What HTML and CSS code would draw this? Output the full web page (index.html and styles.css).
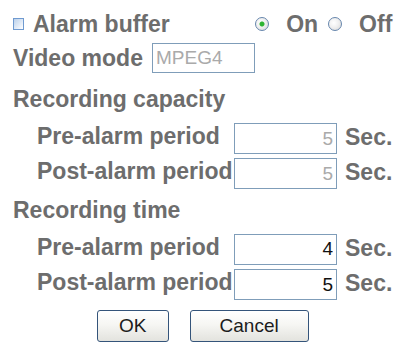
FILE: index.html
```html
<!DOCTYPE html>
<html>
<head>
<meta charset="utf-8">
<link rel="stylesheet" href="styles.css">
</head>
<body>
<main class="form">
  <div class="row row-alarm">
    <div class="check"><span class="checkbox"></span><span>Alarm buffer</span></div>
    <div class="radios">
      <span class="radio radio-on"></span><span class="radio-label">On</span>
      <span class="radio"></span><span>Off</span>
    </div>
  </div>
  <div class="row">
    <span class="label-video">Video mode</span>
    <input class="field field-video dim" type="text" value="MPEG4" readonly>
  </div>
  <div class="row">Recording capacity</div>
  <div class="row sub">
    <span class="label">Pre-alarm period</span>
    <input class="field field-num dim" type="text" value="5" readonly>
    <span class="unit">Sec.</span>
  </div>
  <div class="row sub">
    <span class="label">Post-alarm period</span>
    <input class="field field-num dim" type="text" value="5" readonly>
    <span class="unit">Sec.</span>
  </div>
  <div class="row">Recording time</div>
  <div class="row sub">
    <span class="label">Pre-alarm period</span>
    <input class="field field-num" type="text" value="4">
    <span class="unit">Sec.</span>
  </div>
  <div class="row sub">
    <span class="label">Post-alarm period</span>
    <input class="field field-num" type="text" value="5">
    <span class="unit">Sec.</span>
  </div>
  <div class="row buttons">
    <button class="btn btn-ok" type="button">OK</button>
    <button class="btn btn-cancel" type="button">Cancel</button>
  </div>
</main>
</body>
</html>
```
FILE: styles.css
```css
html, body {
  background: #ffffff;
}

body {
  margin: 0;
  padding: 8px 0 0 13px;
  font-family: "Liberation Sans", Arial, sans-serif;
}

.form {
  width: 379px;
  display: grid;
  grid-template-rows: 32px 36px 46px 33px 37px 37px 40px 31px 51px;
  color: #6d6d6d;
  font-weight: bold;
  font-size: 23px;
}

.row {
  display: flex;
  align-items: center;
  white-space: nowrap;
}

.row-alarm {
  justify-content: space-between;
}

.check {
  display: flex;
  align-items: center;
}

.checkbox {
  width: 9px;
  height: 10px;
  border: 1px solid #6f9ad0;
  background: linear-gradient(135deg, #bcd1ea 0%, #e3ecf7 60%, #ffffff 100%);
  margin-right: 9px;
}

.radios {
  display: flex;
  align-items: center;
}

.radio {
  width: 12px;
  height: 12px;
  border: 1px solid #6686ad;
  border-radius: 50%;
  background: radial-gradient(circle at 40% 40%, #ffffff 0%, #f0f0f0 45%, #d4d4d4 100%);
  margin-right: 17px;
}

.radio-on {
  background:
    radial-gradient(circle, #2eb431 0, #2eb431 2px, rgba(46, 180, 49, 0) 3px),
    radial-gradient(circle at 40% 40%, #ffffff 0%, #f0f0f0 45%, #d4d4d4 100%);
}

.radio-label {
  margin-right: 10px;
}

.label-video {
  width: 139px;
}

.field {
  box-sizing: border-box;
  border: 1px solid #7f9db9;
  background: #ffffff;
  font-family: "Liberation Sans", Arial, sans-serif;
  font-weight: normal;
  font-size: 19px;
  color: #111111;
  padding: 0 3px;
  margin: 0;
  outline: none;
}

.field-video {
  width: 103px;
  height: 30px;
}

.field-num {
  width: 103px;
  height: 31px;
  text-align: right;
}

.dim {
  color: #aaaaaa;
}

.sub {
  padding-left: 24px;
}

.label {
  width: 197px;
  padding-bottom: 4px;
}

.unit {
  margin-left: 8px;
  padding-bottom: 2px;
}

.buttons {
  justify-content: center;
  gap: 21px;
}

.btn {
  height: 32px;
  padding: 0;
  border: 1px solid #34547a;
  border-radius: 3px;
  background: linear-gradient(to bottom, #ffffff 0%, #f6f6f3 45%, #e3e3de 100%);
  font-family: "Liberation Sans", Arial, sans-serif;
  font-size: 19px;
  color: #1c1c1c;
}

.btn-ok {
  width: 72px;
}

.btn-cancel {
  width: 119px;
}
```
